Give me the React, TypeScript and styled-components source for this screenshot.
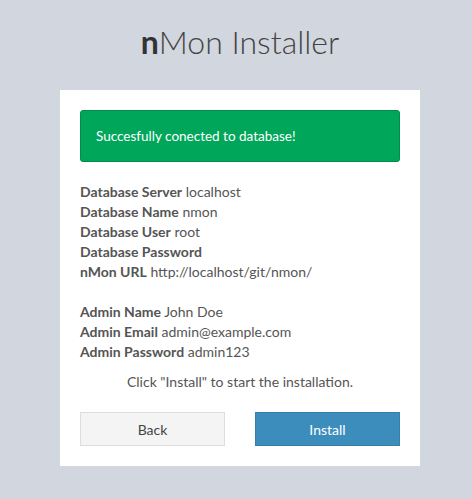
import React from "react";
import styled, { createGlobalStyle } from "styled-components";

const GlobalStyle = createGlobalStyle`
  html, body {
    margin: 0;
    padding: 0;
    background: #d2d6de;
  }
  body {
    font-family: Lato, "Liberation Sans", sans-serif;
    font-size: 14px;
    color: #555;
  }
`;

const Page = styled.div`
  width: 472px;
  min-height: 499px;
  display: flex;
  flex-direction: column;
  align-items: center;
  padding: 22px 0 0 8px;
  box-sizing: border-box;
`;

const Logo = styled.h1`
  margin: 0 0 28px;
  font-size: 32px;
  font-weight: 300;
  line-height: 40px;
  color: #444;
  b {
    font-weight: 700;
    color: #333;
  }
`;

const Card = styled.div`
  width: 360px;
  background: #fff;
  padding: 20px;
  box-sizing: border-box;
`;

const Alert = styled.div`
  background: #00a65a;
  border: 1px solid #008d4c;
  border-radius: 3px;
  color: #fff;
  padding: 15px 15px;
  font-size: 13.5px;
  line-height: 20px;
  margin-bottom: 20px;
`;

const Details = styled.div`
  line-height: 20px;
`;

const Group = styled.div`
  & + & {
    margin-top: 20px;
  }
`;

const Row = styled.div`
  b {
    font-weight: 700;
  }
`;

const Hint = styled.p`
  margin: 10px 0 20px;
  text-align: center;
  line-height: 20px;
`;

const Actions = styled.div`
  display: flex;
  justify-content: space-between;
`;

const Button = styled.button<{ $primary?: boolean }>`
  width: 145px;
  height: 34px;
  font-family: inherit;
  font-size: 14px;
  border: 1px solid ${(p) => (p.$primary ? "#367fa9" : "#ddd")};
  background: ${(p) => (p.$primary ? "#3c8dbc" : "#f4f4f4")};
  color: ${(p) => (p.$primary ? "#fff" : "#444")};
  cursor: pointer;
`;

const dbInfo = [
  ["Database Server", "localhost"],
  ["Database Name", "nmon"],
  ["Database User", "root"],
  ["Database Password", ""],
  ["nMon URL", "http://localhost/git/nmon/"],
];

const adminInfo = [
  ["Admin Name", "John Doe"],
  ["Admin Email", "admin@example.com"],
  ["Admin Password", "admin123"],
];

export default function App() {
  return (
    <>
      <GlobalStyle />
      <Page>
        <Logo>
          <b>n</b>Mon Installer
        </Logo>
        <Card>
          <Alert>Succesfully conected to database!</Alert>
          <Details>
            <Group>
              {dbInfo.map(([label, value]) => (
                <Row key={label}>
                  <b>{label}</b> {value}
                </Row>
              ))}
            </Group>
            <Group>
              {adminInfo.map(([label, value]) => (
                <Row key={label}>
                  <b>{label}</b> {value}
                </Row>
              ))}
            </Group>
          </Details>
          <Hint>Click "Install" to start the installation.</Hint>
          <Actions>
            <Button>Back</Button>
            <Button $primary>Install</Button>
          </Actions>
        </Card>
      </Page>
    </>
  );
}
